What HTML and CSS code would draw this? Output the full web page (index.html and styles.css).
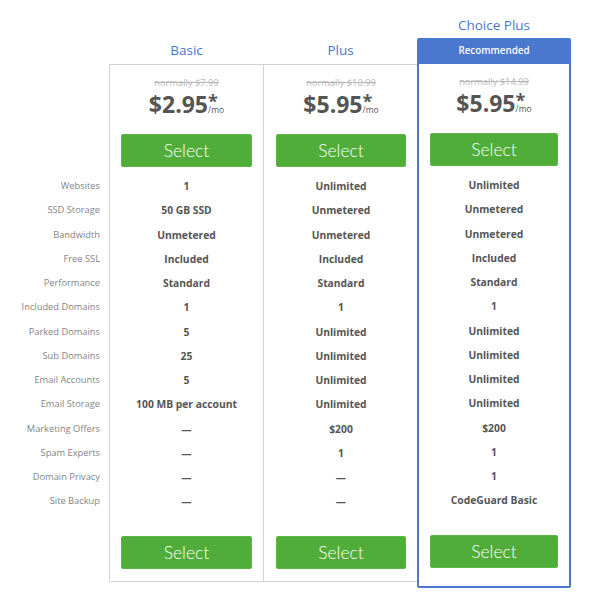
FILE: index.html
```html
<!DOCTYPE html>
<html>
<head>
<meta charset="utf-8">
<link rel="stylesheet" href="styles.css">
</head>
<body>
<div class="table">
  <div class="labels">
    <div class="row">Websites</div>
    <div class="row">SSD Storage</div>
    <div class="row">Bandwidth</div>
    <div class="row">Free SSL</div>
    <div class="row">Performance</div>
    <div class="row">Included Domains</div>
    <div class="row">Parked Domains</div>
    <div class="row">Sub Domains</div>
    <div class="row">Email Accounts</div>
    <div class="row">Email Storage</div>
    <div class="row">Marketing Offers</div>
    <div class="row">Spam Experts</div>
    <div class="row">Domain Privacy</div>
    <div class="row">Site Backup</div>
  </div>

  <div class="plan plan-basic">
    <div class="title">Basic</div>
    <div class="box">
      <div class="was">normally $7.99</div>
      <div class="price">$2.95<span class="star">*</span><span class="mo">/mo</span></div>
      <div class="btn">Select</div>
      <div class="values">
        <div class="row">1</div>
        <div class="row">50 GB SSD</div>
        <div class="row">Unmetered</div>
        <div class="row">Included</div>
        <div class="row">Standard</div>
        <div class="row">1</div>
        <div class="row">5</div>
        <div class="row">25</div>
        <div class="row">5</div>
        <div class="row">100 MB per account</div>
        <div class="row">—</div>
        <div class="row">—</div>
        <div class="row">—</div>
        <div class="row">—</div>
      </div>
      <div class="btn btn-bottom">Select</div>
    </div>
  </div>

  <div class="plan plan-plus">
    <div class="title">Plus</div>
    <div class="box">
      <div class="was">normally $10.99</div>
      <div class="price">$5.95<span class="star">*</span><span class="mo">/mo</span></div>
      <div class="btn">Select</div>
      <div class="values">
        <div class="row">Unlimited</div>
        <div class="row">Unmetered</div>
        <div class="row">Unmetered</div>
        <div class="row">Included</div>
        <div class="row">Standard</div>
        <div class="row">1</div>
        <div class="row">Unlimited</div>
        <div class="row">Unlimited</div>
        <div class="row">Unlimited</div>
        <div class="row">Unlimited</div>
        <div class="row">$200</div>
        <div class="row">1</div>
        <div class="row">—</div>
        <div class="row">—</div>
      </div>
      <div class="btn btn-bottom">Select</div>
    </div>
  </div>

  <div class="plan plan-choice">
    <div class="title">Choice Plus</div>
    <div class="box">
      <div class="ribbon">Recommended</div>
      <div class="was">normally $14.99</div>
      <div class="price">$5.95<span class="star">*</span><span class="mo">/mo</span></div>
      <div class="btn">Select</div>
      <div class="values">
        <div class="row">Unlimited</div>
        <div class="row">Unmetered</div>
        <div class="row">Unmetered</div>
        <div class="row">Included</div>
        <div class="row">Standard</div>
        <div class="row">1</div>
        <div class="row">Unlimited</div>
        <div class="row">Unlimited</div>
        <div class="row">Unlimited</div>
        <div class="row">Unlimited</div>
        <div class="row">$200</div>
        <div class="row">1</div>
        <div class="row">1</div>
        <div class="row">CodeGuard Basic</div>
      </div>
      <div class="btn btn-bottom">Select</div>
    </div>
  </div>
</div>
</body>
</html>
```

FILE: styles.css
```css
* { box-sizing: border-box; }
html, body {
  margin: 0;
  padding: 0;
  background: #fff;
}
body {
  font-family: "Open Sans", "DejaVu Sans", sans-serif;
}
.table {
  display: flex;
  align-items: flex-start;
}
.labels {
  width: 109px;
  padding-top: 174px;
  padding-right: 9px;
  text-align: right;
  color: #848484;
  font-size: 9.3px;
}
.row {
  height: 24.25px;
  line-height: 24.25px;
  white-space: nowrap;
}
.plan {
  display: flex;
  flex-direction: column;
}
.plan-basic, .plan-plus {
  padding-top: 40px;
}
.plan-plus { width: 153px; }
.plan-basic { width: 155px; }
.plan-choice { width: 154px; padding-top: 15px; }
.title {
  height: 20px;
  line-height: 20px;
  text-align: center;
  color: #4a78cf;
  font-size: 13.5px;
  margin-bottom: 4px;
}
.plan-choice .title { margin-bottom: 3px; }
.box {
  border: 1px solid #d3d3d3;
  padding: 12px 11px 12px;
  text-align: center;
}
.plan-plus .box { border-left: none; border-right: none; padding: 12px 11px 12px 12px; }
.plan-choice .box {
  border: 2px solid #4a78cf;
  border-radius: 2px;
  padding: 0 11px 18px;
}
.ribbon {
  background: #4a78cf;
  color: #fff;
  height: 24px;
  line-height: 22px;
  margin: 0 -11px 12px;
  font-size: 9.8px;
  font-weight: 600;
}
.was {
  height: 12px;
  line-height: 12px;
  font-size: 9.3px;
  color: #b8b8b8;
  text-decoration: line-through;
}
.price {
  margin-top: 1px;
  height: 28px;
  line-height: 28px;
  font-size: 23px;
  font-weight: 700;
  color: #555;
  white-space: nowrap;
}
.star {
  display: inline-block;
  width: 0;
  font-size: 18px;
  vertical-align: 5px;
  line-height: 0;
}
.mo {
  font-size: 8.5px;
  font-weight: 400;
}
.btn {
  margin-top: 16px;
  height: 33px;
  line-height: 32px;
  background: #51ad3a;
  border: 1px solid #5ab544;
  border-radius: 2px;
  color: #fff;
  font-family: "Lato", sans-serif;
  font-weight: 300;
  font-size: 17.5px;
}
.values {
  margin-top: 7px;
  color: #555;
  font-size: 10.3px;
  font-weight: 700;
}
.btn-bottom {
  margin-top: 22.5px;
}
```
